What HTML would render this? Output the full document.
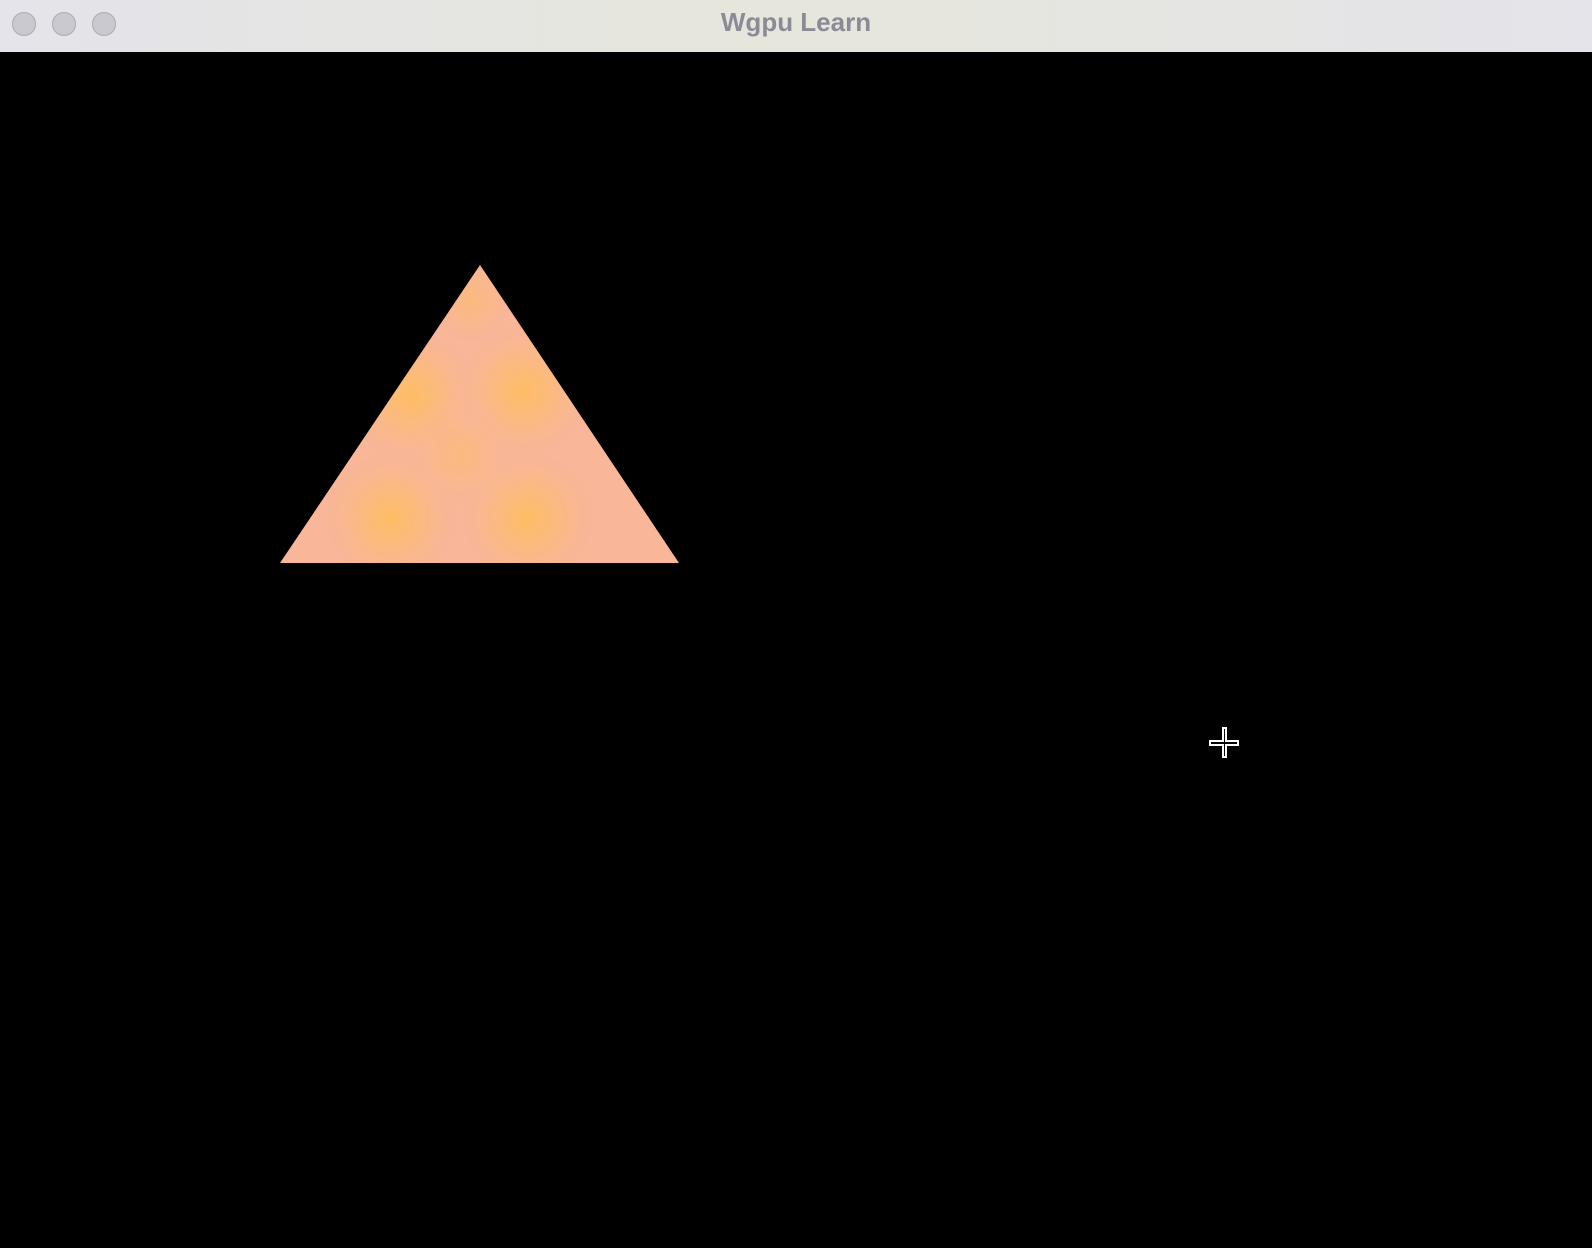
<!DOCTYPE html>
<html><head><style>
html,body{margin:0;padding:0;width:1592px;height:1248px;overflow:hidden;background:#000}
.bar{position:absolute;left:0;top:0;width:1592px;height:52px;background:linear-gradient(90deg,#e4e4ea 0%,#e6e6dc 50%,#e4e4ea 100%)}
.dot{position:absolute;top:12px;width:22px;height:22px;border-radius:50%;background:#c9c9cf;border:1px solid #a9aab6}
.title{position:absolute;left:0;width:1592px;top:7px;text-align:center;font:bold 26px "Liberation Sans",sans-serif;color:#8b8b98}
</style></head><body>
<div class="bar">
<div class="dot" style="left:12px"></div>
<div class="dot" style="left:52px"></div>
<div class="dot" style="left:92px"></div>
<div class="title">Wgpu Learn</div>
</div>
<svg width="1592" height="1248" style="position:absolute;left:0;top:0">
<defs>
<clipPath id="t"><polygon points="480,265 679,563 280,563"/></clipPath>
<radialGradient id="s"><stop offset="0" stop-color="#ffbe5c" stop-opacity="0.9"/><stop offset="0.4" stop-color="#fdbc70" stop-opacity="0.6"/><stop offset="1" stop-color="#f7b4a0" stop-opacity="0"/></radialGradient>
</defs>
<polygon points="480,265 679,563 280,563" fill="#f9b698"/>
<g clip-path="url(#t)">
<circle cx="411" cy="396" r="75" fill="url(#s)"/>
<circle cx="523" cy="391" r="75" fill="url(#s)"/>
<circle cx="391" cy="518" r="75" fill="url(#s)"/>
<circle cx="528" cy="518" r="75" fill="url(#s)"/>
<circle cx="470" cy="300" r="50" fill="url(#s)" opacity="0.5"/>
<circle cx="460" cy="455" r="60" fill="url(#s)" opacity="0.5"/>
</g>
<rect x="1222" y="727" width="5" height="31" fill="#fff"/>
<rect x="1209" y="740" width="30" height="6" fill="#fff"/>
<rect x="1224" y="729" width="1" height="27" fill="#000"/>
<rect x="1211" y="742" width="26" height="2" fill="#000"/>
</svg>
</body></html>
